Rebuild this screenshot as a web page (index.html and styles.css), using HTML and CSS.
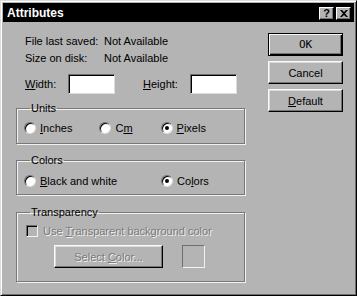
FILE: index.html
```html
<!DOCTYPE html>
<html>
<head>
<meta charset="utf-8">
<link rel="stylesheet" href="styles.css">
</head>
<body>
<div class="window">
  <div class="titlebar">
    <span class="title">Attributes</span>
    <div class="tbtns">
      <span class="tbtn">?</span>
      <span class="tbtn tx">
        <svg width="8" height="7" viewBox="0 0 8 7"><path d="M0 0h2l2 2 2-2h2L5 3.5 8 7H6L4 5 2 7H0l3-3.5z" fill="#000"/></svg>
      </span>
    </div>
  </div>
  <div class="content">
    <div class="left">
      <div class="info">
        <div class="irow"><span class="ilabel">File last saved:</span><span>Not Available</span></div>
        <div class="irow"><span class="ilabel">Size on disk:</span><span>Not Available</span></div>
      </div>
      <div class="dims">
        <span class="dlabel"><u>W</u>idth:</span><span class="field"></span>
        <span class="dlabel hl"><u>H</u>eight:</span><span class="field"></span>
      </div>
      <fieldset class="group units">
        <legend>Units</legend>
        <label class="radio r1"><span class="dot"></span><span><u>I</u>nches</span></label>
        <label class="radio r2"><span class="dot"></span><span>C<u>m</u></span></label>
        <label class="radio r3"><span class="dot on"></span><span><u>P</u>ixels</span></label>
      </fieldset>
      <fieldset class="group colors">
        <legend>Colors</legend>
        <label class="radio c1"><span class="dot"></span><span><u>B</u>lack and white</span></label>
        <label class="radio c2"><span class="dot on"></span><span>Co<u>l</u>ors</span></label>
      </fieldset>
      <fieldset class="group transp">
        <legend>Transparency</legend>
        <div class="check"><span class="box"></span><span class="dis">Use <u>T</u>ransparent background color</span></div>
        <div class="selrow">
          <span class="btn selbtn"><span class="dis">Select <u>C</u>olor...</span></span>
          <span class="swatch"></span>
        </div>
      </fieldset>
    </div>
    <div class="right">
      <span class="btn default"><span class="ok">OK</span></span>
      <span class="btn">Cancel</span>
      <span class="btn"><span><u>D</u>efault</span></span>
    </div>
  </div>
</div>
</body>
</html>
```

FILE: styles.css
```css
html, body {
  margin: 0;
  padding: 0;
  width: 357px;
  height: 296px;
  overflow: hidden;
  background: #b4b4b4;
}
.window {
  box-sizing: border-box;
  width: 357px;
  height: 296px;
  background: #b4b4b4;
  border-top: 1px solid #dcdcdc;
  border-left: 1px solid #dcdcdc;
  border-right: 1px solid #000;
  border-bottom: 1px solid #000;
  box-shadow: inset 1px 1px 0 #fff, inset -1px -1px 0 #6e6e6e;
  padding: 2px;
  font-family: "Liberation Sans", Arial, sans-serif;
  font-size: 11px;
  color: #000;
  display: flex;
  flex-direction: column;
}
.titlebar {
  height: 19px;
  background: #000;
  display: flex;
  align-items: center;
  justify-content: space-between;
  padding: 0 3px 0 4px;
  flex-shrink: 0;
}
.title {
  color: #fff;
  font-weight: bold;
  font-size: 12px;
}
.tbtns {
  display: flex;
  gap: 2px;
  margin-top: 1px;
}
.tbtn {
  box-sizing: border-box;
  width: 15px;
  height: 13px;
  background: #b4b4b4;
  border-top: 1px solid #fff;
  border-left: 1px solid #fff;
  border-right: 1px solid #000;
  border-bottom: 1px solid #000;
  box-shadow: inset -1px -1px 0 #707070;
  font-weight: bold;
  font-size: 11px;
  line-height: 11px;
  text-align: center;
  display: flex;
  align-items: center;
  justify-content: center;
}
.content {
  display: flex;
  flex: 1;
}
.left {
  width: 229px;
  padding-left: 13px;
  padding-top: 11px;
}
.info {
  padding-left: 9px;
}
.irow {
  display: flex;
  height: 17px;
  line-height: 17px;
}
.ilabel {
  width: 79px;
}
.dims {
  display: flex;
  align-items: center;
  padding-left: 9px;
  margin-top: 7px;
  height: 20px;
}
.dlabel {
  width: 43px;
}
.dlabel.hl {
  width: 47px;
  margin-left: 28px;
}
.field {
  box-sizing: border-box;
  width: 47px;
  height: 20px;
  background: #fff;
  border-top: 1px solid #6e6e6e;
  border-left: 1px solid #6e6e6e;
  border-right: 1px solid #dcdcdc;
  border-bottom: 1px solid #dcdcdc;
  box-shadow: inset 1px 1px 0 #000;
}
.group {
  margin: 0;
  border: 1px solid #787878;
  box-shadow: 1px 1px 0 #f2f2f2, inset 1px 1px 0 #f2f2f2;
  padding: 0 7px;
  width: 229px;
  box-sizing: border-box;
}
.group legend {
  padding: 0 1px;
  margin-left: 6px;
  line-height: 13px;
}
.units {
  margin-top: 8px;
  height: 42px;
  display: flex;
  align-items: center;
  padding-top: 1px;
  padding-bottom: 4px;
}
.colors {
  margin-top: 10px;
  height: 41px;
  display: flex;
  align-items: center;
  padding-top: 0;
}
.transp {
  margin-top: 11px;
  height: 76px;
  padding-top: 6px;
}
.radio {
  display: flex;
  align-items: center;
  gap: 4px;
}
.r2 { margin-left: 27px; }
.r3 { margin-left: 28px; }
.c2 { margin-left: 44px; }
.dot {
  box-sizing: border-box;
  width: 12px;
  height: 12px;
  border-radius: 50%;
  background: #fff;
  border: 1px solid;
  border-color: #6e6e6e #dcdcdc #dcdcdc #6e6e6e;
  box-shadow: inset 1px 1px 0 #000;
  display: flex;
  align-items: center;
  justify-content: center;
}
.dot.on::after {
  content: "";
  width: 4px;
  height: 4px;
  border-radius: 50%;
  background: #000;
}
.check {
  display: flex;
  align-items: center;
  gap: 5px;
  padding-left: 2px;
}
.box {
  box-sizing: border-box;
  width: 12px;
  height: 12px;
  background: #b4b4b4;
  border: 1px solid;
  border-color: #6e6e6e #f2f2f2 #f2f2f2 #6e6e6e;
  box-shadow: inset 1px 1px 0 #000;
}
.dis {
  color: #7a7a7a;
  text-shadow: 1px 1px 0 #f2f2f2;
}
.selrow {
  display: flex;
  align-items: center;
  margin-top: 8px;
  padding-left: 30px;
  gap: 19px;
}
.btn {
  box-sizing: border-box;
  height: 23px;
  display: flex;
  align-items: center;
  justify-content: center;
  background: #b4b4b4;
  border-top: 1px solid #f8f8f8;
  border-left: 1px solid #f8f8f8;
  border-right: 1px solid #000;
  border-bottom: 1px solid #000;
  box-shadow: inset -1px -1px 0 #747474, inset 1px 1px 0 #dcdcdc;
}
.selbtn {
  width: 109px;
}
.swatch {
  box-sizing: border-box;
  width: 23px;
  height: 23px;
  border: 1px solid;
  border-color: #6e6e6e #f2f2f2 #f2f2f2 #6e6e6e;
}
.right {
  display: flex;
  flex-direction: column;
  gap: 5px;
  padding-top: 11px;
  margin-left: 23px;
  width: 75px;
}
.right .btn {
  width: 75px;
}
.btn.default {
  border: 1px solid #000;
  box-shadow: inset 1px 1px 0 #f8f8f8, inset -1px -1px 0 #000, inset -2px -2px 0 #747474;
}
.ok {
  font-family: "DejaVu Sans Mono", monospace;
  font-size: 11px;
}
```
